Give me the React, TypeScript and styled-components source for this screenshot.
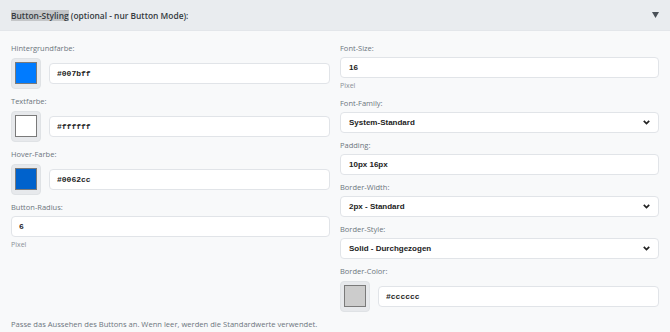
import React from "react";
import styled, { createGlobalStyle } from "styled-components";

const GlobalStyle = createGlobalStyle`
  html, body { margin: 0; padding: 0; background: #f8f9fa; }
  body { font-family: "Open Sans", "Noto Sans", sans-serif; color: #212529; }
  * { box-sizing: border-box; }
`;

const Panel = styled.div`
  width: 670px;
  height: 332px;
  background: #f8f9fa;
  overflow: hidden;
`;

const Header = styled.div`
  height: 31px;
  display: flex;
  align-items: center;
  justify-content: space-between;
  padding: 0 11px 0 11px;
  background: #e9ecef;
  border-bottom: 1px solid #e3e6ea;
`;

const Title = styled.div`
  font-size: 8.4px;
  font-weight: 600;
  color: #343a40;
  line-height: 13px;
`;

const Highlight = styled.span`
  background: #c4c6c8;
`;

const Body = styled.div`
  padding: 11px 11px 0 11px;
`;

const Grid = styled.div`
  display: grid;
  grid-template-columns: 1fr 1fr;
  column-gap: 10px;
  align-items: start;
`;

const Column = styled.div`
  display: flex;
  flex-direction: column;
`;

const Field = styled.div`
  display: flex;
  flex-direction: column;
  margin-bottom: 6px;
`;

const Label = styled.div`
  font-size: 7.5px;
  line-height: 12px;
  color: #6c757d;
  margin-bottom: 3px;
`;

const Hint = styled.div`
  font-size: 7px;
  line-height: 10px;
  color: #8a9097;
  margin-top: 3px;
`;

const ColorRow = styled.div`
  display: flex;
  align-items: center;
  gap: 8px;
  height: 32px;
  & > :last-child {
    flex: 1;
  }
`;

const Swatch = styled.div`
  width: 30px;
  height: 31px;
  padding: 3px 3px 4px 3px;
  background: #e7e9ec;
  border: 1px solid #dfe2e5;
  border-radius: 4px;
  flex: none;
`;

const SwatchColor = styled.div<{ $color: string }>`
  width: 100%;
  height: 100%;
  background: ${(p) => p.$color};
  border: 1px solid #7a7a7a;
`;

const Box = styled.div<{ $mono?: boolean }>`
  height: 21px;
  flex: none;
  display: flex;
  align-items: center;
  justify-content: space-between;
  padding: 0 8px 0 ${(p) => (p.$mono ? "7px" : "8px")};
  background: #ffffff;
  border: 1px solid #e1e4e8;
  border-radius: 4px;
  font-family: ${(p) =>
    p.$mono ? '"Liberation Mono", "DejaVu Sans Mono", monospace' : '"Liberation Sans", Arial, sans-serif'};
  font-size: 8px;
  font-weight: 700;
  color: #222;
`;

const Help = styled.div`
  font-size: 7.6px;
  line-height: 11px;
  color: #6c757d;
  margin-top: 1px;
`;

const Chevron = () => (
  <svg width="7" height="5" viewBox="0 0 7 5">
    <path d="M0.8 0.9 L3.5 3.6 L6.2 0.9" fill="none" stroke="#222" strokeWidth="1.7" />
  </svg>
);

const Arrow = () => (
  <svg width="7" height="6" viewBox="0 0 7 6">
    <path d="M0 0 H7 L3.5 6 Z" fill="#495057" />
  </svg>
);

const ColorField = ({ label, color }: { label: string; color: string }) => (
  <Field>
    <Label>{label}</Label>
    <ColorRow>
      <Swatch>
        <SwatchColor $color={color} />
      </Swatch>
      <Box $mono>{color}</Box>
    </ColorRow>
  </Field>
);

const TextField = ({ label, value, hint }: { label: string; value: string; hint?: string }) => (
  <Field>
    <Label>{label}</Label>
    <Box>{value}</Box>
    {hint && <Hint>{hint}</Hint>}
  </Field>
);

const SelectField = ({ label, value }: { label: string; value: string }) => (
  <Field>
    <Label>{label}</Label>
    <Box>
      <span>{value}</span>
      <Chevron />
    </Box>
  </Field>
);

export default function App() {
  return (
    <>
      <GlobalStyle />
      <Panel>
        <Header>
          <Title>
            <Highlight>Button-Styling</Highlight> (optional - nur Button Mode):
          </Title>
          <Arrow />
        </Header>
        <Body>
          <Grid>
            <Column>
              <ColorField label="Hintergrundfarbe:" color="#007bff" />
              <ColorField label="Textfarbe:" color="#ffffff" />
              <ColorField label="Hover-Farbe:" color="#0062cc" />
              <Field>
                <Label>Button-Radius:</Label>
                <Box $mono>6</Box>
                <Hint>Pixel</Hint>
              </Field>
            </Column>
            <Column>
              <TextField label="Font-Size:" value="16" hint="Pixel" />
              <SelectField label="Font-Family:" value="System-Standard" />
              <TextField label="Padding:" value="10px 16px" />
              <SelectField label="Border-Width:" value="2px - Standard" />
              <SelectField label="Border-Style:" value="Solid - Durchgezogen" />
              <ColorField label="Border-Color:" color="#cccccc" />
            </Column>
          </Grid>
          <Help>Passe das Aussehen des Buttons an. Wenn leer, werden die Standardwerte verwendet.</Help>
        </Body>
      </Panel>
    </>
  );
}
